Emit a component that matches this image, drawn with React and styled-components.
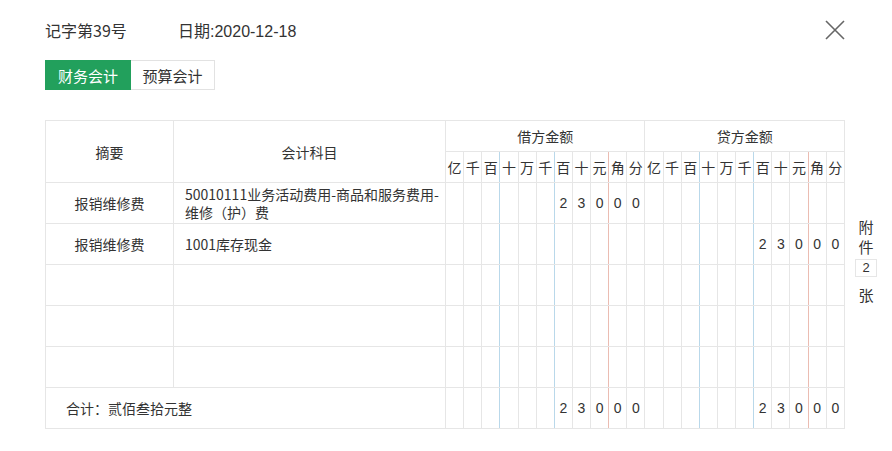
import React from "react";
import styled, { createGlobalStyle } from "styled-components";

const GlobalStyle = createGlobalStyle`
  body {
    margin: 0;
    background: #fff;
    font-family: "Liberation Sans", "Noto Sans CJK SC", sans-serif;
    color: #333;
  }
`;

const UNITS = ["亿", "千", "百", "十", "万", "千", "百", "十", "元", "角", "分"];

const rows = [
  {
    summary: "报销维修费",
    subject: "50010111业务活动费用-商品和服务费用-维修（护）费",
    debit: "23000",
    credit: "",
  },
  { summary: "报销维修费", subject: "1001库存现金", debit: "", credit: "23000" },
  { summary: "", subject: "", debit: "", credit: "" },
  { summary: "", subject: "", debit: "", credit: "" },
  { summary: "", subject: "", debit: "", credit: "" },
];

// right-align an amount into the 11 unit cells
const toDigits = (value) => {
  const cells = Array(11).fill("");
  const chars = value.split("");
  chars.forEach((c, i) => {
    cells[11 - chars.length + i] = c;
  });
  return cells;
};

const Page = styled.div`
  padding: 19px 0 0 45px;
  width: 892px;
  box-sizing: border-box;
`;

const TopBar = styled.div`
  display: flex;
  align-items: center;
  height: 22px;
  padding-right: 47px;
  font-family: "Noto Sans CJK SC", "Liberation Sans", sans-serif;
  font-size: 16px;
`;

const Title = styled.span`
  width: 133px;
`;

const DateText = styled.span`
  flex: 1;
  font-family: "Liberation Sans", "Noto Sans CJK SC", sans-serif;
`;

const Close = styled.button`
  border: 0;
  background: none;
  padding: 0;
  width: 20px;
  height: 20px;
  cursor: pointer;
  display: flex;
`;

const Tabs = styled.div`
  display: flex;
  margin-top: 19px;
`;

const Tab = styled.div`
  height: 30px;
  box-sizing: border-box;
  display: flex;
  align-items: center;
  justify-content: center;
  font-family: "Noto Sans CJK SC", sans-serif;
  font-size: 15px;
  background: ${(p) => (p.$active ? "#22a05c" : "#fff")};
  color: ${(p) => (p.$active ? "#fff" : "#333")};
  border: 1px solid ${(p) => (p.$active ? "#22a05c" : "#e2e2e2")};
  border-left-width: ${(p) => (p.$active ? "1px" : "0")};
  width: ${(p) => p.$w}px;
`;

const Body = styled.div`
  display: flex;
  margin-top: 30px;
`;

const Table = styled.table`
  border-collapse: collapse;
  table-layout: fixed;
  width: 800px;
  flex-shrink: 0;
  font-family: "Noto Sans CJK SC", "Liberation Sans", sans-serif;
  font-size: 14px;
  color: #333;
`;

const Th = styled.th`
  border: 1px solid #e6e6e6;
  font-weight: normal;
  padding: 0;
  height: 30px;
  text-align: center;
`;

const UnitTh = styled.th`
  border: 1px solid #e6e6e6;
  font-weight: normal;
  padding: 0;
  height: 30px;
  text-align: center;
  font-size: 14px;
  ${(p) => p.$line && `border-right-color: ${p.$line};`}
`;

const Row = styled.tr`
  height: 41px;
`;

const Td = styled.td`
  border: 1px solid #e6e6e6;
  padding: 0 ${(p) => (p.$pad ? 2 : 0)}px 0 ${(p) => p.$pad || 0}px;
  text-align: ${(p) => p.$align || "center"};
  line-height: 18px;
  vertical-align: middle;
`;

const Digit = styled.td`
  border: 1px solid #e6e6e6;
  padding: 0;
  text-align: center;
  font-family: "Liberation Sans", sans-serif;
  font-size: 14px;
  ${(p) => p.$line && `border-right-color: ${p.$line};`}
`;

const Side = styled.div`
  display: flex;
  flex-direction: column;
  align-items: center;
  width: 42px;
  margin-top: 97px;
  font-family: "Noto Sans CJK SC", sans-serif;
  font-size: 15px;
  line-height: 20px;
  color: #333;
`;

const Count = styled.div`
  margin: 2px 0 8px;
  width: 20px;
  height: 16px;
  border: 1px solid #e6e6e6;
  font-family: "Liberation Sans", sans-serif;
  font-size: 13px;
  line-height: 16px;
  text-align: center;
`;

const BLUE = "#b9d8ea";
const RED = "#ebbcb2";
const lineFor = (i) => (i === 2 || i === 5 ? BLUE : i === 8 ? RED : null);

const Units = () =>
  UNITS.map((u, i) => (
    <UnitTh key={i} $line={lineFor(i)}>
      {u}
    </UnitTh>
  ));

const Digits = ({ value }) =>
  toDigits(value).map((d, i) => (
    <Digit key={i} $line={lineFor(i)}>
      {d}
    </Digit>
  ));

const App = () => {
  return (
    <Page>
      <GlobalStyle />
      <TopBar>
        <Title>记字第39号</Title>
        <DateText>日期:2020-12-18</DateText>
        <Close aria-label="关闭">
          <svg width="20" height="20" viewBox="0 0 20 20">
            <path d="M1 1L19 19M19 1L1 19" stroke="#666" strokeWidth="1.6" />
          </svg>
        </Close>
      </TopBar>
      <Tabs>
        <Tab $active $w={86}>财务会计</Tab>
        <Tab $w={84}>预算会计</Tab>
      </Tabs>
      <Body>
        <Table>
          <colgroup>
            <col style={{ width: 128 }} />
            <col style={{ width: 272 }} />
            {Array.from({ length: 22 }).map((_, i) => (
              <col key={i} />
            ))}
          </colgroup>
          <thead>
            <tr>
              <Th rowSpan={2}>摘要</Th>
              <Th rowSpan={2}>会计科目</Th>
              <Th colSpan={11}>借方金额</Th>
              <Th colSpan={11}>贷方金额</Th>
            </tr>
            <tr>
              <Units />
              <Units />
            </tr>
          </thead>
          <tbody>
            {rows.map((r, i) => (
              <Row key={i}>
                <Td>{r.summary}</Td>
                <Td $align="left" $pad={11}>
                  {r.subject}
                </Td>
                <Digits value={r.debit} />
                <Digits value={r.credit} />
              </Row>
            ))}
            <Row>
              <Td colSpan={2} $align="left" $pad={20}>
                合计：贰佰叁拾元整
              </Td>
              <Digits value="23000" />
              <Digits value="23000" />
            </Row>
          </tbody>
        </Table>
        <Side>
          <span>附</span>
          <span>件</span>
          <Count>2</Count>
          <span>张</span>
        </Side>
      </Body>
    </Page>
  );
};

export default App;
